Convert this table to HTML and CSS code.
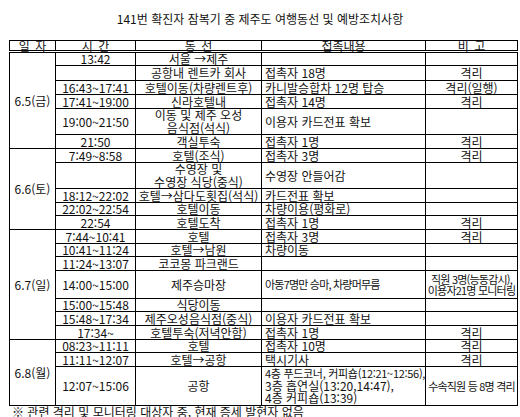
FILE: index.html
```html
<!DOCTYPE html>
<html lang="ko">
<head>
<meta charset="utf-8">
<link rel="stylesheet" href="styles.css">
</head>
<body>
<h1 class="title">141번 확진자 잠복기 중 제주도 여행동선 및 예방조치사항</h1>
<table class="route">
  <colgroup>
    <col class="c-date"><col class="c-time"><col class="c-path"><col class="c-contact"><col class="c-note">
  </colgroup>
  <thead>
    <tr class="head">
      <th>일 자</th><th>시 간</th><th>동 선</th><th>접촉내용</th><th>비 고</th>
    </tr>
  </thead>
  <tbody>
    <tr class="r13 grp"><td class="date" rowspan="6">6.5(금)</td><td>13:42</td><td>서울 →제주</td><td class="ct"></td><td></td></tr>
    <tr class="r15"><td></td><td>공항내 렌트카 회사</td><td class="ct">접촉자 18명</td><td>격리</td></tr>
    <tr class="r14"><td>16:43~17:41</td><td>호텔이동(차량렌트후)</td><td class="ct">카니발승합차 12명 탑승</td><td>격리(일행)</td></tr>
    <tr class="r14"><td>17:41~19:00</td><td>신라호텔내</td><td class="ct">접촉자 14명</td><td>격리</td></tr>
    <tr class="r26"><td>19:00~21:50</td><td class="ml">이동 및 제주 오성<br>음식점(석식)</td><td class="ct">이용자 카드전표 확보</td><td></td></tr>
    <tr class="r14"><td>21:50</td><td>객실투숙</td><td class="ct">접촉자 1명</td><td>격리</td></tr>

    <tr class="r14 grp"><td class="date" rowspan="5">6.6(토)</td><td>7:49~8:58</td><td>호텔(조식)</td><td class="ct">접촉자 3명</td><td>격리</td></tr>
    <tr class="r26"><td></td><td class="ml">수영장 및<br>수영장 식당(중식)</td><td class="ct">수영장 안들어감</td><td></td></tr>
    <tr class="r14"><td>18:12~22:02</td><td>호텔→삼다도횟집(석식)</td><td class="ct">카드전표 확보</td><td></td></tr>
    <tr class="r13"><td>22:02~22:54</td><td>호텔이동</td><td class="ct">차량이용(평화로)</td><td></td></tr>
    <tr class="r14"><td>22:54</td><td>호텔도착</td><td class="ct">접촉자 1명</td><td>격리</td></tr>

    <tr class="r14 grp"><td class="date" rowspan="7">6.7(일)</td><td>7:44~10:41</td><td>호텔</td><td class="ct">접촉자 3명</td><td>격리</td></tr>
    <tr class="r13"><td>10:41~11:24</td><td>호텔→남원</td><td class="ct">차량이동</td><td></td></tr>
    <tr class="r14"><td>11:24~13:07</td><td>코코몽 파크랜드</td><td class="ct"></td><td></td></tr>
    <tr class="r28"><td>14:00~15:00</td><td>제주승마장</td><td class="ct small">아동7명만 승마, 차량머무름</td><td class="small">직원 3명(능동감시),<br>이용자21명 모니터링</td></tr>
    <tr class="r13"><td>15:00~15:48</td><td>식당이동</td><td class="ct"></td><td></td></tr>
    <tr class="r14"><td>15:48~17:34</td><td>제주오성음식점(중식)</td><td class="ct">이용자 카드전표 확보</td><td></td></tr>
    <tr class="r14"><td>17:34~</td><td>호텔투숙(저녁안함)</td><td class="ct">접촉자 1명</td><td>격리</td></tr>

    <tr class="r13 grp"><td class="date" rowspan="3">6.8(월)</td><td>08:23~11:11</td><td>호텔</td><td class="ct">접촉자 10명</td><td>격리</td></tr>
    <tr class="r14"><td>11:11~12:07</td><td>호텔→공항</td><td class="ct">택시기사</td><td>격리</td></tr>
    <tr class="r39"><td>12:07~15:06</td><td>공항</td><td class="ct ml"><span class="tight">4층 푸드코너, 커피숍(12:21~12:56),</span><br>3층 흡연실(13:20,14:47),<br>4층 커피숍(13:39)</td><td class="small">수속직원 등 8명 격리</td></tr>
  </tbody>
</table>
<p class="foot">※ 관련 격리 및 모니터링 대상자 중, 현재 증세 발현자 없음</p>
</body>
</html>
```

FILE: styles.css
```css
html, body {
  margin: 0;
  padding: 0;
  background: #ffffff;
}
body {
  width: 520px;
  height: 417px;
  overflow: hidden;
  font-family: "Noto Sans CJK KR", "Noto Sans", sans-serif;
  font-size: 12px;
  color: #111;
}
.title {
  margin: 0;
  padding-top: 12px;
  height: 28px;
  font-size: 12px;
  line-height: 14px;
  font-weight: normal;
  text-align: center;
}
.route {
  margin-left: 9px;
  width: 508px;
  table-layout: fixed;
  border-collapse: collapse;
  border: 1px solid #000;
}
.c-date { width: 46px; }
.c-time { width: 80px; }
.c-path { width: 126px; }
.c-contact { width: 164px; }
.c-note { width: 92px; }
.route th, .route td {
  padding: 0;
  border: 1px solid #000;
  text-align: center;
  vertical-align: middle;
  line-height: 12px;
  font-weight: normal;
  white-space: nowrap;
}
.head th {
  height: 9px;
  line-height: 9px;
  word-spacing: 2px;
  border-bottom: 3px double #000;
}
.route td.ct {
  text-align: left;
  padding-left: 3px;
}
.route td.ml {
  line-height: 12.5px;
}
.route td.small {
  font-size: 11px;
  line-height: 11px;
  letter-spacing: -0.8px;
}
.tight {
  font-size: 11px;
  letter-spacing: -0.3px;
}
.r13 { height: 13px; }
.r14 { height: 14px; }
.r15 { height: 15px; }
.r26 { height: 26px; }
.r28 { height: 28px; }
.r39 { height: 39px; }
.foot {
  margin: 0 0 0 12px;
  line-height: 12px;
  font-size: 12px;
}
```
